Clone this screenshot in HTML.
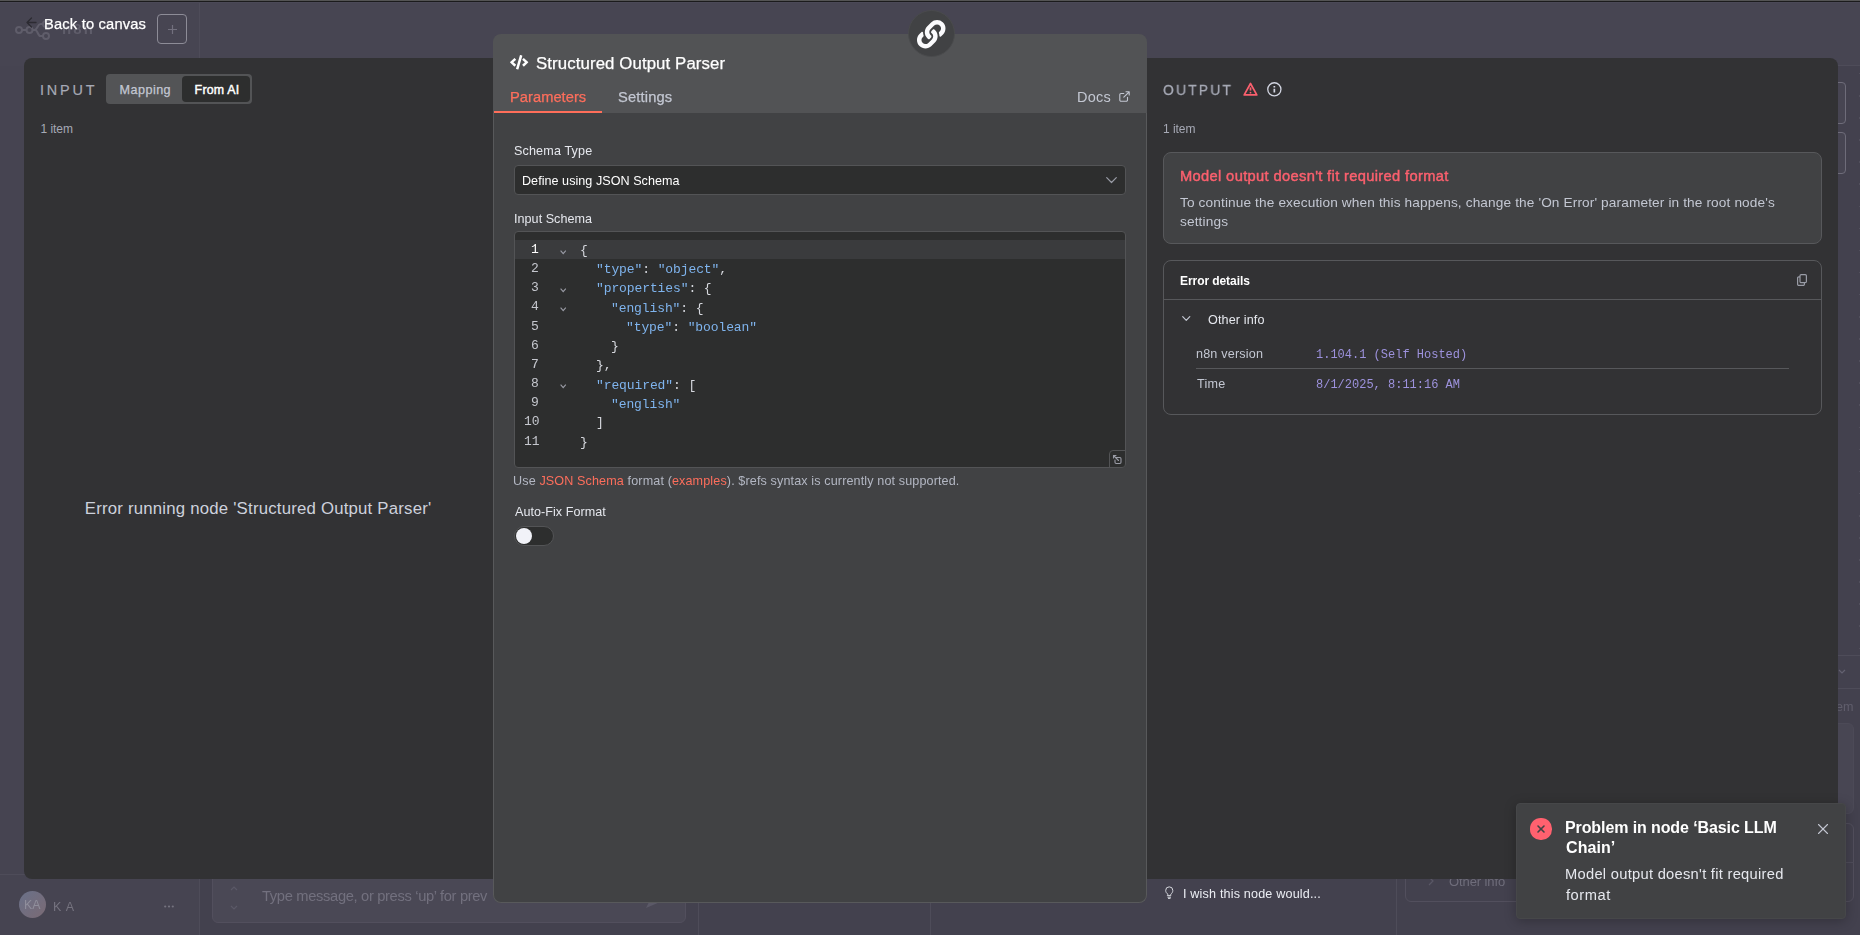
<!DOCTYPE html>
<html>
<head>
<meta charset="utf-8">
<title>n8n</title>
<style>
*{box-sizing:border-box;margin:0;padding:0}
html,body{width:1860px;height:935px;overflow:hidden}
body{background:#43414e;font-family:"Liberation Sans",sans-serif;position:relative;color:#fff}
.a{position:absolute}
.t{position:absolute;white-space:nowrap;line-height:1;will-change:transform}
.l{will-change:auto}
.m{font-family:"Liberation Mono",monospace}
svg{position:absolute;overflow:visible}
</style>
</head>
<body>
<div class="a" style="left:0px;top:0px;width:1860px;height:66px;background:#474552;border-bottom:1px solid #4e4c59"></div>
<div class="a" style="left:0px;top:0px;width:200px;height:935px;background:#464451;border-right:1px solid #4e4c59"></div>
<div class="a" style="left:0px;top:0px;width:200px;height:66px;background:#474552;border-right:1px solid #4e4c59"></div>
<div class="a" style="left:0px;top:0px;width:1860px;height:3px;background:linear-gradient(#545454 0 1px,#1b1b1c 1px 2px,#4b4957 2px 3px)"></div>
<div class="a" style="left:1859px;top:66px;width:1px;height:590px;background:repeating-linear-gradient(#514f5c 0 1.500px,transparent 1.500px 22.100px);background-position:0 7px"></div>
<div class="a" style="left:0px;top:874px;width:200px;height:1px;background:#4e4c59"></div>
<div class="a" style="left:698px;top:879px;width:1px;height:56px;background:#4e4c59"></div>
<div class="a" style="left:930px;top:879px;width:1px;height:56px;background:#4e4c59"></div>
<div class="a" style="left:1396px;top:879px;width:1px;height:56px;background:#4e4c59"></div>
<div class="a" style="left:212px;top:850px;width:474px;height:73px;background:#4a4855;border:1px solid #524f5d;border-radius:6px"></div>
<div class="t" style="left:262px;top:889px;font-size:14.7px;color:#72707e;letter-spacing:-0.33px;">Type message, or press ‘up’ for prev</div>
<svg style="left:229px;top:884px" width="10" height="28" viewBox="0 0 10 28" fill="none" stroke="#5b5967" stroke-width="1.2"><path d="M2 6l3-3 3 3M2 22l3 3 3-3"/></svg>
<svg style="left:646px;top:896px" width="14" height="12" viewBox="0 0 14 12"><path d="M0 0l14 6-14 6 3-6z" fill="#5b5967"/></svg>
<div class="a" style="left:1826px;top:82px;width:20px;height:42px;background:#474552;border:1px solid #6e6c79;border-radius:4px"></div>
<div class="a" style="left:1826px;top:132px;width:20px;height:42px;background:#474552;border:1px solid #6e6c79;border-radius:4px"></div>
<div class="a" style="left:1838px;top:654.5px;width:22px;height:1px;background:#4e4c59"></div>
<div class="a" style="left:1838px;top:687.5px;width:22px;height:1px;background:#4e4c59"></div>
<svg style="left:1838px;top:669px" width="8" height="6" viewBox="0 0 8 6" fill="none" stroke="#636170" stroke-width="1.2"><path d="M1 1l3 3 3-3"/></svg>
<div class="t" style="left:1836.3px;top:701px;font-size:12.6px;color:#605e6c;">em</div>
<div class="a" style="left:1820px;top:722.5px;width:33.5px;height:91px;background:#484653;border:1px solid #4c4a57;border-radius:6px"></div>
<div class="a" style="left:1405px;top:823px;width:448.5px;height:78.5px;border:1px solid #524f5d;border-radius:6px"></div>
<div class="a" style="left:1405px;top:862px;width:448.5px;height:1px;background:#4f4d5a"></div>
<div class="t" style="left:1449px;top:875px;font-size:13px;color:#6f6d7b;letter-spacing:-0.1px;">Other info</div>
<svg style="left:1427px;top:876px" width="8" height="10" viewBox="0 0 8 10" fill="none" stroke="#5a5866" stroke-width="1.2"><path d="M2 1l4 4-4 4"/></svg>
<svg style="left:14px;top:19.400px" width="40" height="22" viewBox="0 0 40 22" fill="none" stroke="#5f5d6a" stroke-width="2"><circle cx="5" cy="11" r="3"/><circle cx="15.5" cy="11" r="3"/><circle cx="32" cy="5" r="3"/><circle cx="32" cy="17" r="3"/><path d="M8 11h4.5M18.5 11h2c3 0 3-6 6-6h2.5M21 11c3 0 2.5 6 5.500 6h2.500"/></svg>
<div class="t" style="left:61.84px;top:21px;font-size:15px;color:#5f5d6a;font-weight:bold;letter-spacing:2.15px;">n8n</div>
<svg style="left:25.500px;top:16.500px" width="11" height="11" viewBox="0 0 11 11" fill="none" stroke="#2c2b32" stroke-width="1.300" stroke-linecap="round" stroke-linejoin="round"><path d="M10 5.500H1M5.500 1L1 5.500L5.500 10"/></svg>
<div class="t" style="left:43.84px;top:17px;font-size:14.7px;color:#ffffff;letter-spacing:0.18px;-webkit-text-stroke:0.25px currentColor;">Back to canvas</div>
<div class="a" style="left:157px;top:14px;width:30px;height:30px;border:1px solid #8d8c97;border-radius:4px"></div>
<svg style="left:167.500px;top:24.500px" width="9" height="9" viewBox="0 0 9 9" fill="none" stroke="#72707e" stroke-width="1.200"><path d="M4.500 0v9M0 4.500h9"/></svg>
<div class="a" style="left:19px;top:891px;width:27px;height:27px;border-radius:50%;background:linear-gradient(135deg,#6a7189,#7a6a74)"></div>
<div class="t" style="left:24.3px;top:899px;font-size:12.3px;color:#908f9c;letter-spacing:0.09px;">KA</div>
<div class="t" style="left:53.2px;top:901px;font-size:12.5px;color:#75737f;letter-spacing:0.77px;">K A</div>
<svg style="left:164px;top:905px" width="10" height="3" viewBox="0 0 10 3" fill="#75737f"><circle cx="1.2" cy="1.5" r="1.100"/><circle cx="5" cy="1.5" r="1.100"/><circle cx="8.800" cy="1.5" r="1.100"/></svg>
<div class="a" style="left:24px;top:58px;width:480px;height:821px;background:#323234;border-radius:8px 0 0 8px"></div>
<div class="t l" style="left:40.4px;top:82px;font-size:15.5px;color:#a6a9b5;letter-spacing:3.04px;transform:scaleX(0.93);transform-origin:0 0;-webkit-text-stroke:0.2px currentColor;">INPUT</div>
<div class="a" style="left:106px;top:74px;width:146px;height:30px;background:#535456;border-radius:4px"></div>
<div class="a" style="left:182px;top:76px;width:68px;height:26px;background:#2d2e2e;border-radius:4px"></div>
<div class="t l" style="left:119.56px;top:84px;font-size:12.6px;color:#c3c7d2;letter-spacing:0.46px;-webkit-text-stroke:0.25px currentColor;">Mapping</div>
<div class="t l" style="left:194.6px;top:84px;font-size:12.4px;color:#ffffff;letter-spacing:0.22px;-webkit-text-stroke:0.45px currentColor;">From AI</div>
<div class="t l" style="left:40.5px;top:123px;font-size:12px;color:#a6a9b5;letter-spacing:-0.04px;">1 item</div>
<div class="t l" style="left:84.84px;top:501px;font-size:16.8px;color:#cdd1dc;letter-spacing:0.2px;">Error running node 'Structured Output Parser'</div>
<div class="a" style="left:1140px;top:58px;width:698px;height:821px;background:#323234;border-radius:0 8px 8px 0"></div>
<div class="t" style="left:1163.4px;top:82px;font-size:15.4px;color:#a6a9b5;letter-spacing:2.45px;transform:scaleX(0.9);transform-origin:0 0;-webkit-text-stroke:0.3px currentColor;">OUTPUT</div>
<svg style="left:1242.500px;top:81.800px" width="15" height="14.400" viewBox="0 0 15 14.400" fill="none" stroke="#fb606e" stroke-width="1.700" stroke-linecap="round" stroke-linejoin="round"><path d="M7.500 1.500L13.800 12.900H1.200Z"/><path d="M7.500 5.400v3.200" stroke-width="1.700" stroke-linecap="butt"/><circle cx="7.500" cy="10.700" r="0.900" fill="#fb606e" stroke="none"/></svg>
<svg style="left:1266.600px;top:81.700px" width="14.700" height="14.700" viewBox="0 0 14.700 14.700" fill="none" stroke="#d3d6e2" stroke-width="1.300"><circle cx="7.350" cy="7.350" r="6.600"/><path d="M7.350 6.800v3.700M7.350 4.100v1.500" stroke-width="1.700"/></svg>
<div class="t" style="left:1162.66px;top:123px;font-size:12px;color:#a6a9b5;letter-spacing:-0.04px;">1 item</div>
<div class="a" style="left:1163px;top:152px;width:659px;height:92px;background:#414244;border:1px solid #57585b;border-radius:8px"></div>
<div class="t" style="left:1180.3px;top:169px;font-size:14.7px;color:#fb606e;letter-spacing:0.34px;-webkit-text-stroke:0.45px currentColor;">Model output doesn't fit required format</div>
<div class="t" style="left:1180.3px;top:196px;font-size:13.65px;color:#c3c7d2;letter-spacing:0.13px;">To continue the execution when this happens, change the 'On Error' parameter in the root node's</div>
<div class="t" style="left:1180.3px;top:215px;font-size:13.65px;color:#c3c7d2;letter-spacing:0.14px;">settings</div>
<div class="a" style="left:1163px;top:260px;width:659px;height:155px;border:1px solid #57585b;border-radius:8px"><div class="a" style="left:0;top:38px;width:657px;height:1px;background:#57585b"></div></div>
<div class="t" style="left:1180.2px;top:275px;font-size:12px;color:#ffffff;font-weight:bold;letter-spacing:-0.07px;">Error details</div>
<svg style="left:1796.800px;top:274px" width="10" height="12" viewBox="0 0 10 12" fill="none" stroke="#999ca6" stroke-width="1.200" stroke-linejoin="round"><rect x="3" y="0.600" width="6.400" height="8" rx="1.200"/><path d="M3 2.800H1.800A1.200 1.200 0 0 0 0.600 4v6.200a1.200 1.200 0 0 0 1.200 1.200h4.400a1.200 1.200 0 0 0 1.200-1.200V8.600"/></svg>
<svg style="left:1181.500px;top:315.500px" width="8.500" height="5.500" viewBox="0 0 8.500 5.500" fill="none" stroke="#c3c7d2" stroke-width="1.200" stroke-linecap="round" stroke-linejoin="round"><path d="M0.700 0.700L4.250 4.400L7.800 0.700"/></svg>
<div class="t" style="left:1207.8px;top:314px;font-size:12.6px;color:#e6e8ee;letter-spacing:0.12px;">Other info</div>
<div class="t" style="left:1196.4px;top:348px;font-size:12.6px;color:#c3c7d2;letter-spacing:0.18px;">n8n version</div>
<div class="t m" style="left:1315.7px;top:349px;font-size:12px;color:#9d92dd;">1.104.1 (Self Hosted)</div>
<div class="a" style="left:1196px;top:368px;width:593px;height:1px;background:#57585b"></div>
<div class="t" style="left:1196.6px;top:378px;font-size:12.6px;color:#c3c7d2;letter-spacing:0.26px;">Time</div>
<div class="t m" style="left:1315.7px;top:379px;font-size:12px;color:#9d92dd;">8/1/2025, 8:11:16 AM</div>
<svg style="left:1164.500px;top:886px" width="8.500" height="13" viewBox="0 0 8.500 13" fill="none" stroke="#d6d8de" stroke-width="1" stroke-linecap="round"><path d="M2.700 8.200C1.500 7.300 0.700 6 0.700 4.400A3.550 3.550 0 0 1 7.800 4.400C7.800 6 7 7.300 5.800 8.200V9.600H2.700ZM2.900 11.200H5.600M3.400 12.400H5.100"/></svg>
<div class="t" style="left:1183.2px;top:888px;font-size:12.6px;color:#eceef4;letter-spacing:0.17px;">I wish this node would...</div>
<div class="a" style="left:493px;top:34px;width:654px;height:869px;background:#525355;border-radius:8px;overflow:hidden"><div class="a" style="left:0;top:79px;width:654px;height:790px;background:#414244;border:1px solid #58595b;border-top:none;border-radius:0 0 8px 8px"></div><div class="a" style="left:1px;top:77px;width:108px;height:2px;background:#ff6e5a"></div></div>
<div class="a" style="left:907.9px;top:9.9px;width:47.2px;height:47.2px;background:#414244;border-radius:50%;border:1px solid #4a4b4d"></div>
<svg style="left:917px;top:19.500px" width="28.500" height="28.500" viewBox="0 0 512 512"><path fill="#fbfbfd" d="M326.612 185.391c59.747 59.809 58.927 155.698.36 214.590-.11.12-.24.25-.36.37l-67.2 67.2c-59.27 59.27-155.699 59.262-214.960 0-59.27-59.260-59.27-155.700 0-214.960l37.106-37.106c9.840-9.840 26.786-3.300 27.294 10.606.648 17.722 3.826 35.527 9.690 52.721 1.986 5.822.567 12.262-3.783 16.612l-13.087 13.087c-28.026 28.026-28.905 73.660-1.155 101.960 28.024 28.579 74.086 28.749 102.325.51l67.2-67.190c28.191-28.191 28.073-73.757 0-101.830-3.701-3.694-7.429-6.564-10.341-8.569a16.037 16.037 0 0 1-6.947-12.606c-.396-10.567 3.348-21.456 11.698-29.806l21.054-21.055c5.521-5.521 14.182-6.199 20.584-1.731a152.482 152.482 0 0 1 20.522 17.197zM467.547 44.449c-59.261-59.262-155.690-59.270-214.960 0l-67.2 67.2c-.12.12-.25.25-.36.37-58.566 58.892-59.387 154.781.36 214.590a152.454 152.454 0 0 0 20.521 17.196c6.402 4.468 15.064 3.789 20.584-1.731l21.054-21.055c8.350-8.350 12.094-19.239 11.698-29.806a16.037 16.037 0 0 0-6.947-12.606c-2.912-2.005-6.640-4.875-10.341-8.569-28.073-28.073-28.191-73.639 0-101.830l67.2-67.190c28.239-28.239 74.300-28.069 102.325.51 27.750 28.300 26.872 73.934-1.155 101.960l-13.087 13.087c-4.350 4.350-5.769 10.790-3.783 16.612 5.864 17.194 9.042 34.999 9.690 52.721.509 13.906 17.454 20.446 27.294 10.606l37.106-37.106c59.271-59.259 59.271-155.699.001-214.959z"/></svg>
<svg style="left:509.800px;top:54.700px" width="18.300" height="14.640" viewBox="0 0 640 512"><path fill="#ffffff" d="M278.900 511.500l-61-17.700c-6.400-1.800-10-8.500-8.200-14.900L346.200 8.700c1.800-6.400 8.500-10 14.900-8.200l61 17.700c6.400 1.800 10 8.500 8.200 14.900L293.800 503.300c-1.900 6.400-8.500 10.100-14.900 8.200zm-114-112.200l43.500-46.400c4.600-4.900 4.300-12.700-.8-17.200L117 256l90.600-79.700c5.100-4.500 5.500-12.300.8-17.200l-43.500-46.400c-4.500-4.800-12.100-5.100-17-.5L3.800 247.200c-5.100 4.700-5.100 12.800 0 17.500l144.100 135.100c4.900 4.600 12.500 4.400 17-.5zm327.200.6l144.100-135.100c5.100-4.700 5.100-12.800 0-17.500L492.100 112.100c-4.800-4.500-12.400-4.300-17 .5L431.600 159c-4.600 4.900-4.300 12.700.8 17.200L523 256l-90.600 79.700c-5.100 4.500-5.500 12.300-.8 17.200l43.500 46.400c4.500 4.900 12.100 5.100 17 .6z"/></svg>
<div class="t" style="left:536.4px;top:56px;font-size:16.8px;color:#ffffff;letter-spacing:0.11px;-webkit-text-stroke:0.25px currentColor;">Structured Output Parser</div>
<div class="t" style="left:510.3px;top:90px;font-size:14.7px;color:#fd6e5c;letter-spacing:0.03px;-webkit-text-stroke:0.25px currentColor;">Parameters</div>
<div class="t" style="left:618.2px;top:90px;font-size:14.7px;color:#c3c7d2;letter-spacing:0.15px;-webkit-text-stroke:0.25px currentColor;">Settings</div>
<div class="t" style="left:1077.3px;top:90px;font-size:14.5px;color:#c3c7d2;letter-spacing:0.22px;">Docs</div>
<svg style="left:1118.500px;top:90.500px" width="11" height="11" viewBox="0 0 11 11" fill="none" stroke="#c3c7d2" stroke-width="1.100" stroke-linecap="round" stroke-linejoin="round"><path d="M8.500 6.200v2.800a1.200 1.200 0 0 1-1.200 1.200H2a1.200 1.200 0 0 1-1.200-1.200V3.700A1.200 1.200 0 0 1 2 2.500h2.800M7 0.800h3.200V4M4.800 6.200L10.200 0.800"/></svg>
<div class="t" style="left:514.3px;top:145px;font-size:12.6px;color:#e6e8ee;letter-spacing:0.14px;">Schema Type</div>
<div class="a" style="left:514px;top:165px;width:612px;height:30px;background:#2d2e2e;border:1px solid #535456;border-radius:4px"></div>
<div class="t" style="left:522.2px;top:175px;font-size:12.6px;color:#ffffff;letter-spacing:0.03px;">Define using JSON Schema</div>
<svg style="left:1105.500px;top:177px" width="11" height="7" viewBox="0 0 11 7" fill="none" stroke="#999ca6" stroke-width="1.200" stroke-linecap="round" stroke-linejoin="round"><path d="M0.700 0.700L5.500 5.500L10.300 0.700"/></svg>
<div class="t" style="left:514.3px;top:213px;font-size:12.6px;color:#e6e8ee;letter-spacing:0.03px;">Input Schema</div>
<div class="a" style="left:514px;top:231px;width:612px;height:237px;background:#2d2e2e;border:1px solid #535456;border-radius:4px;overflow:hidden"><div class="a" style="left:0;top:8px;width:610px;height:19px;background:#3a3b3d"></div><div class="a" style="left:594px;top:218px;width:17px;height:18px;border:1px solid #535456;border-radius:4px 0 4px 0;background:#2d2e2e"></div></div>
<svg style="left:1113px;top:455px" width="9" height="9" viewBox="0 0 9 9" fill="none" stroke="#9a9ca6" stroke-width="1.100" stroke-linecap="round" stroke-linejoin="round"><path d="M3 2.500h3.800a1.200 1.200 0 0 1 1.200 1.200v3.600a1.200 1.200 0 0 1-1.200 1.200H3.200A1.200 1.200 0 0 1 2 7.300V5M0.500 0.500L5.500 5.500M0.500 3V0.500H3"/></svg>
<div class="t m" style="left:531.3px;top:243px;font-size:13px;color:#ffffff;letter-spacing:-0.1px;">1</div>
<div class="t m" style="left:580.2px;top:244px;font-size:13px;color:#d6d8de;letter-spacing:-0.1px;">{</div>
<svg style="left:559.900px;top:249.90px" width="6.400" height="4.400" viewBox="0 0 6.400 4.400" fill="none" stroke="#9a9ca6" stroke-width="1.100"><path d="M0.600 0.700L3.200 3.700L5.800 0.700"/></svg>
<div class="t m" style="left:531.3px;top:262px;font-size:13px;color:#c5c7ce;letter-spacing:-0.1px;">2</div>
<div class="t m" style="left:595.6px;top:263px;font-size:13px;color:#d6d8de;letter-spacing:-0.1px;"><span style="color:#7fb4ee">"type"</span>: <span style="color:#7fb4ee">"object"</span>,</div>
<div class="t m" style="left:531.3px;top:281px;font-size:13px;color:#c5c7ce;letter-spacing:-0.1px;">3</div>
<div class="t m" style="left:595.6px;top:282px;font-size:13px;color:#d6d8de;letter-spacing:-0.1px;"><span style="color:#7fb4ee">"properties"</span>: {</div>
<svg style="left:559.900px;top:288.24px" width="6.400" height="4.400" viewBox="0 0 6.400 4.400" fill="none" stroke="#9a9ca6" stroke-width="1.100"><path d="M0.600 0.700L3.200 3.700L5.800 0.700"/></svg>
<div class="t m" style="left:531.3px;top:300px;font-size:13px;color:#c5c7ce;letter-spacing:-0.1px;">4</div>
<div class="t m" style="left:611px;top:302px;font-size:13px;color:#d6d8de;letter-spacing:-0.1px;"><span style="color:#7fb4ee">"english"</span>: {</div>
<svg style="left:559.900px;top:307.41px" width="6.400" height="4.400" viewBox="0 0 6.400 4.400" fill="none" stroke="#9a9ca6" stroke-width="1.100"><path d="M0.600 0.700L3.200 3.700L5.800 0.700"/></svg>
<div class="t m" style="left:531.3px;top:320px;font-size:13px;color:#c5c7ce;letter-spacing:-0.1px;">5</div>
<div class="t m" style="left:626.4px;top:321px;font-size:13px;color:#d6d8de;letter-spacing:-0.1px;"><span style="color:#7fb4ee">"type"</span>: <span style="color:#7fb4ee">"boolean"</span></div>
<div class="t m" style="left:531.3px;top:339px;font-size:13px;color:#c5c7ce;letter-spacing:-0.1px;">6</div>
<div class="t m" style="left:611px;top:340px;font-size:13px;color:#d6d8de;letter-spacing:-0.1px;">}</div>
<div class="t m" style="left:531.3px;top:358px;font-size:13px;color:#c5c7ce;letter-spacing:-0.1px;">7</div>
<div class="t m" style="left:595.6px;top:359px;font-size:13px;color:#d6d8de;letter-spacing:-0.1px;">},</div>
<div class="t m" style="left:531.3px;top:377px;font-size:13px;color:#c5c7ce;letter-spacing:-0.1px;">8</div>
<div class="t m" style="left:595.6px;top:379px;font-size:13px;color:#d6d8de;letter-spacing:-0.1px;"><span style="color:#7fb4ee">"required"</span>: [</div>
<svg style="left:559.900px;top:384.09px" width="6.400" height="4.400" viewBox="0 0 6.400 4.400" fill="none" stroke="#9a9ca6" stroke-width="1.100"><path d="M0.600 0.700L3.200 3.700L5.800 0.700"/></svg>
<div class="t m" style="left:531.3px;top:396px;font-size:13px;color:#c5c7ce;letter-spacing:-0.1px;">9</div>
<div class="t m" style="left:611px;top:398px;font-size:13px;color:#d6d8de;letter-spacing:-0.1px;"><span style="color:#7fb4ee">"english"</span></div>
<div class="t m" style="left:523.6px;top:415px;font-size:13px;color:#c5c7ce;letter-spacing:-0.1px;">10</div>
<div class="t m" style="left:595.6px;top:416px;font-size:13px;color:#d6d8de;letter-spacing:-0.1px;">]</div>
<div class="t m" style="left:523.6px;top:435px;font-size:13px;color:#c5c7ce;letter-spacing:-0.1px;">11</div>
<div class="t m" style="left:580.2px;top:436px;font-size:13px;color:#d6d8de;letter-spacing:-0.1px;">}</div>
<div class="t" style="left:513.3px;top:475px;font-size:12.6px;color:#b3b7c3;letter-spacing:0.12px;">Use <span style="color:#fd6e5c">JSON Schema</span> format (<span style="color:#fd6e5c">examples</span>). $refs syntax is currently not supported.</div>
<div class="t" style="left:514.5px;top:506px;font-size:12.6px;color:#e6e8ee;letter-spacing:0.03px;">Auto-Fix Format</div>
<div class="a" style="left:514px;top:526px;width:40px;height:20px;background:#2d2e2e;border-radius:10px;border:1px solid #535456"></div>
<div class="a" style="left:516px;top:528px;width:16px;height:16px;background:#f1f2f8;border-radius:50%"></div>
<div class="a" style="left:1516px;top:803px;width:330px;height:116px;background:#414244;border-radius:4px;box-shadow:0 2px 12px rgba(0,0,0,0.25);border:1px solid #464749"></div>
<div class="a" style="left:1530.4px;top:818.4px;width:21.2px;height:21.2px;background:#ff616f;border-radius:50%"></div>
<svg style="left:1537px;top:825px" width="8" height="8" viewBox="0 0 8 8" fill="none" stroke="#414244" stroke-width="1.600" stroke-linecap="round"><path d="M1 1L7 7"/><path d="M7 1L1 7"/></svg>
<div class="t" style="left:1565.2px;top:820px;font-size:16px;color:#ffffff;font-weight:bold;letter-spacing:-0.1px;">Problem in node ‘Basic LLM</div>
<div class="t" style="left:1566px;top:840px;font-size:16px;color:#ffffff;font-weight:bold;letter-spacing:0.08px;">Chain’</div>
<div class="t" style="left:1565.2px;top:867px;font-size:14.7px;color:#e6e8ee;letter-spacing:0.28px;">Model output doesn't fit required</div>
<div class="t" style="left:1566px;top:888px;font-size:14.7px;color:#e6e8ee;letter-spacing:0.53px;">format</div>
<svg style="left:1818px;top:824px" width="10" height="10" viewBox="0 0 10 10" fill="none" stroke="#c3c7d2" stroke-width="1.100" stroke-linecap="round"><path d="M0.500 0.500L9.500 9.500"/><path d="M9.500 0.500L0.500 9.500"/></svg>
</body>
</html>
